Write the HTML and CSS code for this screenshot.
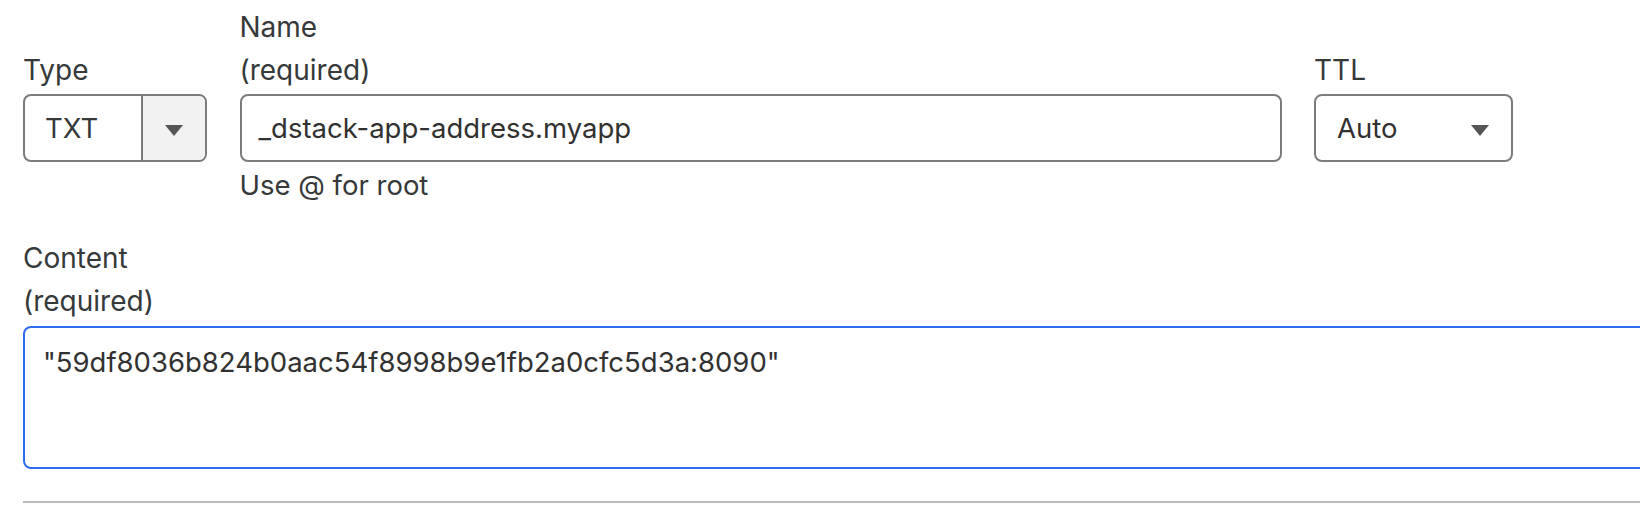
FILE: index.html
```html
<!DOCTYPE html>
<html lang="en">
<head>
<meta charset="utf-8">
<title>DNS record</title>
<link rel="stylesheet" href="styles.css">
</head>
<body>
<div class="page">
  <form class="record-form">
    <div class="top-grid">
      <label class="field-label label-type" for="type">Type</label>
      <label class="field-label label-name" for="name">Name<br>(required)</label>
      <label class="field-label label-ttl" for="ttl">TTL</label>

      <div class="type-select" id="type">
        <span class="type-value">TXT</span>
        <span class="type-button"><span class="caret"></span></span>
      </div>
      <div class="text-input" id="name">_dstack-app-address.myapp</div>
      <div class="ttl-select" id="ttl">
        <span class="ttl-value">Auto</span>
        <span class="caret"></span>
      </div>

      <div class="helper">Use @ for root</div>
    </div>

    <div class="content-block">
      <label class="field-label" for="content">Content<br>(required)</label>
      <div class="textarea" id="content">"59df8036b824b0aac54f8998b9e1fb2a0cfc5d3a:8090"</div>
    </div>

    <hr class="divider">
  </form>
</div>
</body>
</html>
```

FILE: styles.css
```css
html, body {
  margin: 0;
  padding: 0;
  background: #ffffff;
}

body {
  font-family: Inter, "Noto Sans", "Liberation Sans", sans-serif;
  font-size: 27.5px;
  color: #36393a;
  width: 1640px;
  height: 508px;
  overflow: hidden;
}

.page {
  overflow: hidden;
  width: 1640px;
  height: 508px;
}

.record-form {
  padding: 6px 0 0 23px;
  width: 1700px;
}

.top-grid {
  display: grid;
  grid-template-columns: 184px 1042px 199px;
  grid-template-rows: auto 68px auto;
  column-gap: 32.5px;
  align-items: end;
}

.field-label {
  display: block;
  font-size: 28px;
  line-height: 43px;
  color: #36393a;
}

.label-type { grid-column: 1; grid-row: 1; }
.label-name { grid-column: 2; grid-row: 1; }
.label-ttl  { grid-column: 3; grid-row: 1; }

.top-grid .field-label {
  margin-bottom: 2px;
}

.type-select {
  grid-column: 1;
  grid-row: 2;
  display: flex;
  height: 68px;
  box-sizing: border-box;
  border: 2px solid #7b7b7b;
  border-radius: 8px;
  overflow: hidden;
}

.type-value {
  flex: 0 0 116px;
  display: flex;
  align-items: center;
  padding-left: 20px;
  box-sizing: border-box;
  color: #36393a;
}

.type-button {
  flex: 1;
  display: flex;
  align-items: center;
  justify-content: center;
  background: #f2f2f2;
  border-left: 2px solid #7b7b7b;
  padding-top: 4px;
}

.caret {
  width: 0;
  height: 0;
  border-left: 9px solid transparent;
  border-right: 9px solid transparent;
  border-top: 11px solid #555555;
}

.text-input {
  grid-column: 2;
  grid-row: 2;
  height: 68px;
  box-sizing: border-box;
  border: 2px solid #7b7b7b;
  border-radius: 8px;
  padding: 0 17px;
  display: flex;
  align-items: center;
  color: #313131;
}

.ttl-select {
  grid-column: 3;
  grid-row: 2;
  height: 68px;
  box-sizing: border-box;
  border: 2px solid #7b7b7b;
  border-radius: 8px;
  padding: 4px 22px 0 21px;
  display: flex;
  align-items: center;
  justify-content: space-between;
}

.ttl-value {
  margin-top: -4px;
  color: #313131;
}

.helper {
  grid-column: 2;
  grid-row: 3;
  align-self: start;
  line-height: 42px;
  margin-top: 2px;
  color: #36393a;
}

.content-block {
  margin-top: 31px;
}

.content-block .field-label {
  margin-bottom: 3px;
}

.textarea {
  height: 143px;
  box-sizing: border-box;
  border: 2px solid #2f6bef;
  border-radius: 8px;
  padding: 13px 18px;
  line-height: 42px;
  color: #313131;
}

.divider {
  margin: 32px 0 0 0;
  border: 0;
  border-top: 2px solid #bdbdbd;
  height: 0;
}
```
